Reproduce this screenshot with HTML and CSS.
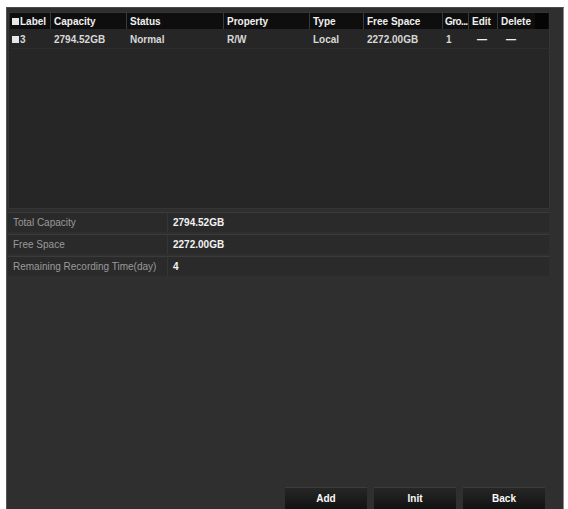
FILE: index.html
```html
<!DOCTYPE html>
<html>
<head>
<meta charset="utf-8">
<link rel="stylesheet" href="styles.css">
</head>
<body>
<div class="panel">
  <div class="table">
    <div class="row head">
      <div class="c"><span class="chk"></span>Label</div>
      <div class="c">Capacity</div>
      <div class="c">Status</div>
      <div class="c">Property</div>
      <div class="c">Type</div>
      <div class="c">Free Space</div>
      <div class="c tight">Gro...</div>
      <div class="c">Edit</div>
      <div class="c">Delete</div>
      <div class="c blank"></div>
    </div>
    <div class="row data">
      <div class="c"><span class="chk"></span>3</div>
      <div class="c">2794.52GB</div>
      <div class="c">Normal</div>
      <div class="c">R/W</div>
      <div class="c">Local</div>
      <div class="c">2272.00GB</div>
      <div class="c">1</div>
      <div class="c dash">—</div>
      <div class="c dash">—</div>
      <div class="c"></div>
    </div>
  </div>
  <div class="info">
    <div class="irow"><div class="lbl">Total Capacity</div><div class="val">2794.52GB</div></div>
    <div class="irow"><div class="lbl">Free Space</div><div class="val">2272.00GB</div></div>
    <div class="irow"><div class="lbl">Remaining Recording Time(day)</div><div class="val">4</div></div>
  </div>
  <div class="spacer"></div>
  <div class="buttons">
    <div class="btn">Add</div>
    <div class="btn">Init</div>
    <div class="btn">Back</div>
  </div>
</div>
</body>
</html>
```
FILE: styles.css
```css
html, body {
  margin: 0;
  padding: 0;
  background: #ffffff;
  height: 509px;
  overflow: hidden;
}
body {
  font-family: "Liberation Sans", Arial, sans-serif;
  font-size: 10px;
}
.panel {
  margin: 7px 0 0 6px;
  width: 558px;
  height: 502px;
  background: #2f2f2f;
  border-top: 1px solid #4a4a4a;
  border-right: 1px solid #8a8a8a;
  border-left: 1px solid #555;
  box-sizing: border-box;
  display: flex;
  flex-direction: column;
  padding: 4px 0 0 1px;
}
.table {
  width: 542px;
  height: 197px;
  background: #262626;
  border: 1px solid #343434;
  box-sizing: border-box;
  padding: 0 0 0 1px;
}
.row {
  display: grid;
  grid-template-columns: 41px 76px 97px 86px 54px 79px 26px 29px 37px 13px;
}
.head {
  height: 16px;
  background: #0e0e0e;
  color: #f0f0f0;
  font-weight: bold;
}
.head .c {
  border-right: 1px solid #3a3a3a;
}
.head .c:nth-last-child(2),
.head .c.blank { border-right: none; }
.head .c.blank { background: #050505; }
.c {
  display: flex;
  align-items: center;
  padding-left: 3px;
  white-space: nowrap;
  overflow: hidden;
  box-sizing: border-box;
}
.head .c.tight {
  padding-left: 2px;
  letter-spacing: -0.6px;
}
.head .c:first-child { padding-left: 2px; }
.data {
  height: 18px;
  margin-top: 1px;
  color: #d8d8d8;
  font-weight: bold;
  border-bottom: 1px solid #2c2c2c;
}
.data .c:first-child { padding-left: 2px; }
.chk {
  display: inline-block;
  width: 7px;
  height: 7px;
  background: #e6e6e6;
  margin-right: 1px;
}
.dash { padding-left: 8px; color: #eee; }
.info {
  margin-top: 3px;
  width: 541px;
  display: flex;
  flex-direction: column;
  gap: 2px;
}
.irow {
  display: flex;
  height: 19px;
  border-top: 1px solid #3b3b3b;
  background: #2a2a2a;
}
.lbl {
  width: 160px;
  padding-left: 5px;
  color: #9a9a9a;
  display: flex;
  align-items: center;
  border-right: 1px solid #353535;
  box-sizing: border-box;
}
.val {
  flex: 1;
  padding-left: 5px;
  color: #f2f2f2;
  font-weight: bold;
  display: flex;
  align-items: center;
}
.spacer { flex: 1; }
.buttons {
  display: flex;
  justify-content: flex-end;
  gap: 7px;
  padding-right: 18px;
}
.btn {
  width: 82px;
  height: 22px;
  background: linear-gradient(#262626, #121212);
  border-top: 1px solid #3c3c3c;
  color: #fafafa;
  font-weight: bold;
  display: flex;
  align-items: center;
  justify-content: center;
  box-sizing: border-box;
}
```
